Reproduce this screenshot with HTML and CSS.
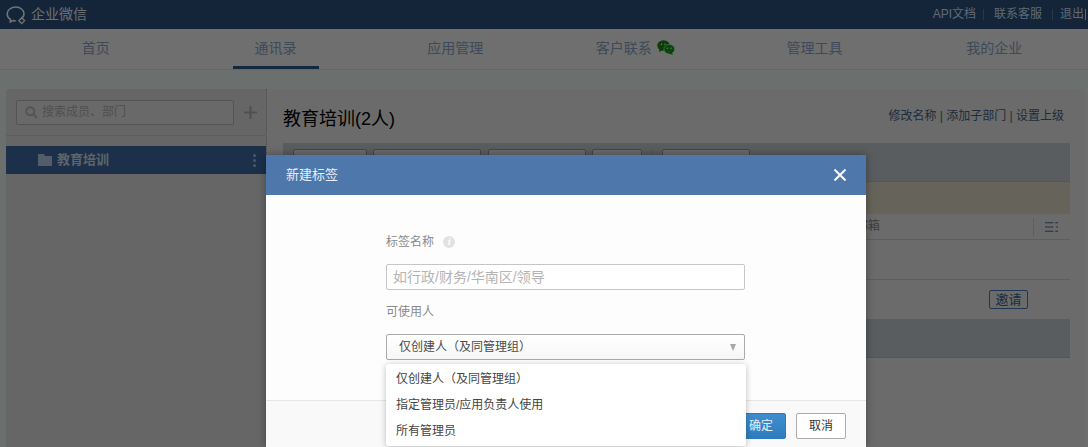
FILE: index.html
```html
<!DOCTYPE html>
<html lang="zh-CN">
<head>
<meta charset="utf-8">
<title>企业微信</title>
<link rel="stylesheet" href="styles.css">
</head>
<body>
<header class="topbar">
  <div class="brand">
    <svg class="brand-icon" width="20" height="20" viewBox="0 0 20 20" fill="none" stroke="currentColor" stroke-width="1.5">
      <path d="M14.5 14.2 C16.6 12.9 18 11 18 8.7 C18 5 14.4 2 9.8 2 C5.2 2 1.2 5 1.2 8.9 C1.2 11.3 2.6 13.3 4.6 14.5 L4.2 17 L7.2 15.6 C8 15.8 8.9 15.9 9.8 15.9"/>
      <path d="M15.5 12.8 L18.6 15.6 L15.8 18.6 L12.8 15.8 Z" stroke-width="1.3"/>
    </svg>
    <span class="brand-name">企业微信</span>
  </div>
  <nav class="toplinks">
    <a class="toplink toplink-first">API文档</a>
    <a class="toplink toplink-mid">联系客服</a>
    <a class="toplink toplink-last">退出</a>
  </nav>
</header>
<nav class="mainnav">
  <div class="navcell"><a class="navlink">首页</a></div>
  <div class="navcell"><a class="navlink navlink-active">通讯录</a></div>
  <div class="navcell"><a class="navlink">应用管理</a></div>
  <div class="navcell">
    <a class="navlink navlink-icon">客户联系
      <svg class="wechat" width="18" height="15" viewBox="0 0 18 15">
        <ellipse cx="6.5" cy="5.5" rx="6.2" ry="5.3" fill="#0f7f0f"/>
        <path d="M2.5 8.5 L2 12 L5.5 10 Z" fill="#0f7f0f"/>
        <ellipse cx="12.3" cy="9.2" rx="5.4" ry="4.8" fill="#0f8f0f" stroke="#dedede" stroke-width=".6"/>
        <path d="M14.5 12.5 L16.2 15 L11.8 13.5 Z" fill="#0f8f0f"/>
        <circle cx="4.4" cy="4.2" r=".8" fill="#dedede"/><circle cx="8" cy="4.2" r=".8" fill="#dedede"/>
        <circle cx="10.4" cy="8.2" r=".7" fill="#dedede"/><circle cx="14" cy="8.2" r=".7" fill="#dedede"/>
      </svg>
    </a>
  </div>
  <div class="navcell"><a class="navlink">管理工具</a></div>
  <div class="navcell"><a class="navlink">我的企业</a></div>
</nav>
<main class="panel">
  <aside class="side">
    <div class="side-search">
      <div class="search">
        <svg width="13" height="13" viewBox="0 0 13 13" fill="none" stroke="#a8a8a8" stroke-width="2"><circle cx="5.3" cy="5.3" r="4"/><path d="M8.3 8.3 L12 12"/></svg>
        <span>搜索成员、部门</span>
      </div>
      <svg class="plus" width="13" height="13" viewBox="0 0 13 13"><path d="M5.5 0h2v5.5H13v2H7.5V13h-2V7.5H0v-2h5.5z" fill="#a0a0a0"/></svg>
    </div>
    <div class="tree-row">
      <svg width="14" height="12" viewBox="0 0 14 12"><path d="M0 0h6l1 2h7v10H0z" fill="#a6b8d2"/></svg>
      <span class="tree-name">教育培训</span>
      <span class="dots"><i></i><i></i><i></i></span>
    </div>
  </aside>
  <section class="content">
    <div class="content-head">
      <h1 class="title">教育培训(2人)</h1>
      <div class="head-links">修改名称 | 添加子部门 | 设置上级</div>
    </div>
    <div class="toolbar">
      <span class="tbtn tbtn-a"></span>
      <span class="tbtn tbtn-b"></span>
      <span class="tbtn tbtn-c"></span>
      <span class="tbtn tbtn-d"></span>
      <span class="tsep"></span>
      <span class="tbtn tbtn-e"></span>
    </div>
    <div class="notice"></div>
    <div class="thead">
      <span class="thead-mail">邮箱</span>
      <span class="thead-tool">
        <svg width="13" height="10" viewBox="0 0 14 10" fill="#3a5f8c"><path d="M0 0h9v1H0zM0 4.500h9v1H0zM0 9h9v1H0zM11 0h3v1h-3zM12 4.500h2v1h-2zM11 9h3v1h-3z"/></svg>
      </span>
    </div>
    <div class="trow"></div>
    <div class="trow trow-invite"><a class="invite">邀请</a></div>
    <div class="toolbar toolbar-bottom"></div>
  </section>
</main>
<div class="mask"></div>
<div class="dialog">
  <div class="dialog-head">
    <span>新建标签</span>
    <svg width="12" height="12" viewBox="0 0 12 12" stroke="#fff" stroke-width="2"><path d="M0.500 0.500 L11.500 11.500 M11.500 0.500 L0.500 11.500"/></svg>
  </div>
  <div class="dialog-body">
    <div class="field-label">标签名称 <span class="info">i</span></div>
    <div class="input">如行政/财务/华南区/领导</div>
    <div class="field-label field-label-second">可使用人</div>
    <div class="select">仅创建人（及同管理组）<span class="caret"></span></div>
    <ul class="menu">
      <li class="menu-item">仅创建人（及同管理组）</li>
      <li class="menu-item">指定管理员/应用负责人使用</li>
      <li class="menu-item">所有管理员</li>
    </ul>
  </div>
  <div class="dialog-foot">
    <a class="btn btn-primary">确定</a>
    <a class="btn">取消</a>
  </div>
</div>
</body>
</html>
```
FILE: styles.css
```css
* { box-sizing: border-box; }
html, body { margin: 0; height: 447px; overflow: hidden; }
body {
  background: #d6dedb;
  font: 12px/1.4 "Liberation Sans", "Noto Sans CJK SC", sans-serif;
  position: relative;
}
.topbar {
  height: 29px;
  background: #284a72;
  display: flex;
  justify-content: space-between;
  align-items: center;
  padding: 0 2px 0 6px;
  color: #dce4ea;
}
.brand { display: flex; align-items: center; gap: 5px; }
.brand-icon { color: #e4e8ea; }
.brand-name { font-size: 14px; color: #d8dfe4; }
.toplinks { display: flex; color: #bed2e4; }
.toplink { border-right: 1px solid #50708f; line-height: 11px; height: 11px; }
.toplink-first { padding-right: 7px; margin-right: 10px; }
.toplink-mid { padding-right: 10px; margin-right: 7px; }
.toplink-last { padding-right: 1px; border-right-color: #bed2e4; }

.mainnav {
  height: 40px;
  background: #dedede;
  display: flex;
  padding: 0 4px 0 6px;
  box-shadow: 0 1px 0 #c8cfcd;
}
.navcell { flex: 1; display: flex; justify-content: center; }
.navlink {
  display: flex;
  align-items: center;
  padding: 0 22px;
  padding-top: 3px;
  font-size: 14px;
  color: #7c94b2;
  border-bottom: 3px solid transparent;
}
.navlink-active { border-bottom-color: #285080; }
.navlink-icon { gap: 5px; padding-left: 1px; padding-right: 0; }
.wechat { margin-top: -3px; }

.panel {
  margin: 20px 3px 0 6px;
  height: 358px;
  display: flex;
  background: #d6d6d6;
  border-radius: 4px 4px 0 0;
}
.side {
  width: 261px;
  flex: none;
  background: #cccccc;
  border-right: 1px dotted #a0a0a0;
  border-radius: 4px 0 0 0;
}
.side-search {
  height: 47px;
  padding: 11px 0 0 10px;
  display: flex;
  gap: 10px;
  border-bottom: 1px solid #bdbdbd;
}
.search {
  width: 218px;
  height: 25px;
  border: 1px solid #a8a8a8;
  border-radius: 2px;
  display: flex;
  align-items: center;
  gap: 4px;
  padding-left: 8px;
  color: #a0a0a0;
  background: #d2d2d2;
}
.plus { margin-top: 6px; }
.tree-row {
  margin-top: 10px;
  height: 28px;
  width: 260px;
  background: #386092;
  display: flex;
  align-items: center;
  padding-left: 32px;
  color: #bcc8d4;
  font-size: 13px;
  font-weight: bold;
  gap: 5px;
}
.tree-name { flex: 1; }
.dots { display: flex; flex-direction: column; gap: 2px; margin-right: 10px; }
.dots i { width: 3px; height: 3px; border-radius: 50%; background: #9cb0c8; }

.content { flex: 1; padding: 0 15px 0 16px; }
.content-head {
  height: 54px;
  display: flex;
  justify-content: space-between;
}
.title { margin: 17px 0 0; font-size: 18px; font-weight: normal; line-height: 26px; color: #000; }
.head-links { margin: 18px 6px 0 0; color: #3e5a7a; line-height: 18px; }
.toolbar {
  height: 39px;
  background: #b2babf;
  border-bottom: 1px solid #a6adb4;
  padding: 6px 10px 0;
  display: flex;
  align-items: flex-start;
}
.tbtn { height: 24px; border: 1px solid #8c8c8c; border-radius: 2px; background: #d4d4d4; }
.tbtn-a { width: 74px; margin-right: 6px; }
.tbtn-b { width: 108px; margin-right: 7px; }
.tbtn-c { width: 98px; margin-right: 6px; }
.tbtn-d { width: 50px; }
.tsep { width: 1px; height: 24px; background: #a0a0a0; margin: 0 10px 0 9px; }
.tbtn-e { width: 88px; }
.notice { height: 31px; background: #cac6b4; }
.thead {
  height: 27px;
  display: flex;
  justify-content: space-between;
  align-items: center;
  padding-left: 573px;
  border-top: 1px solid #c8c8c8;
  border-bottom: 1px solid #bcbcbc;
  color: #7a7a7a;
}
.thead-tool {
  display: flex;
  align-items: center;
  height: 18px;
  border-left: 1px solid #bcbcbc;
  padding: 0 12px 0 11px;
}
.trow { height: 40px; border-bottom: 1px solid #bcbcbc; }
.trow-invite {
  display: flex;
  justify-content: flex-end;
  align-items: center;
  padding-right: 42px;
  border-bottom: 0;
  height: 39px;
}
.invite {
  width: 39px;
  height: 19px;
  border: 1px solid #3e6ea4;
  border-radius: 2px;
  text-align: center;
  line-height: 17px;
  font-size: 13px;
  color: #385a80;
}
.toolbar-bottom { padding: 0; }

.mask { position: absolute; inset: 0; background: rgba(0, 0, 0, .5); }
.dialog {
  position: absolute;
  left: 266px;
  top: 155px;
  width: 600px;
  height: 292px;
  background: #fdfdfd;
  box-shadow: 0 0 8px rgba(0, 0, 0, .35);
  display: flex;
  flex-direction: column;
}
.dialog-head {
  height: 40px;
  flex: none;
  background: #4e78ab;
  color: #e9eff6;
  font-size: 13px;
  display: flex;
  justify-content: space-between;
  align-items: center;
  padding: 0 20px;
}
.dialog-body {
  height: 205px;
  flex: none;
  padding: 37px 0 0 120px;
  position: relative;
  color: #8a8a8a;
}
.field-label { height: 20px; line-height: 20px; display: flex; align-items: center; gap: 9px; }
.field-label-second { margin-top: 12px; }
.info {
  width: 12px;
  height: 12px;
  border-radius: 50%;
  background: #e2e2e2;
  color: #fff;
  font: italic bold 10px/12px "Liberation Serif", serif;
  text-align: center;
}
.input {
  margin-top: 12px;
  width: 359px;
  height: 26px;
  border: 1px solid #c6c6c6;
  border-radius: 2px;
  background: #fff;
  padding-left: 6px;
  line-height: 24px;
  font-size: 14px;
  color: #b4b4b4;
}
.select {
  margin-top: 12px;
  width: 359px;
  height: 26px;
  border: 1px solid #a9a9a9;
  border-radius: 2px;
  background: linear-gradient(#fff, #f6f6f6);
  padding-left: 12px;
  line-height: 24px;
  color: #4a4a4a;
  position: relative;
}
.caret {
  position: absolute;
  right: 8px;
  top: 9px;
  border-left: 3.500px solid transparent;
  border-right: 3.500px solid transparent;
  border-top: 7px solid #a8a8a8;
}
.menu {
  position: absolute;
  left: 120px;
  top: 169px;
  width: 360px;
  height: 82px;
  margin: 0;
  padding: 2px 0 0;
  list-style: none;
  background: #fff;
  border-radius: 3px;
  box-shadow: 0 1px 6px rgba(0, 0, 0, .25);
  z-index: 1;
}
.menu-item { height: 26px; line-height: 26px; padding-left: 10px; color: #444; }
.dialog-foot {
  flex: 1;
  background: #f9f9f9;
  border-top: 1px solid #e4e6ea;
  display: flex;
  justify-content: flex-end;
  align-items: flex-start;
  gap: 10px;
  padding: 12px 20px 0 0;
}
.btn {
  width: 50px;
  height: 26px;
  border: 1px solid #ababab;
  border-radius: 2px;
  background: #fff;
  color: #333;
  text-align: center;
  line-height: 24px;
}
.btn-primary {
  border-color: #3079b8;
  background: linear-gradient(#3f8ccf, #2f7cbd);
  color: #e6f0f8;
}
```
